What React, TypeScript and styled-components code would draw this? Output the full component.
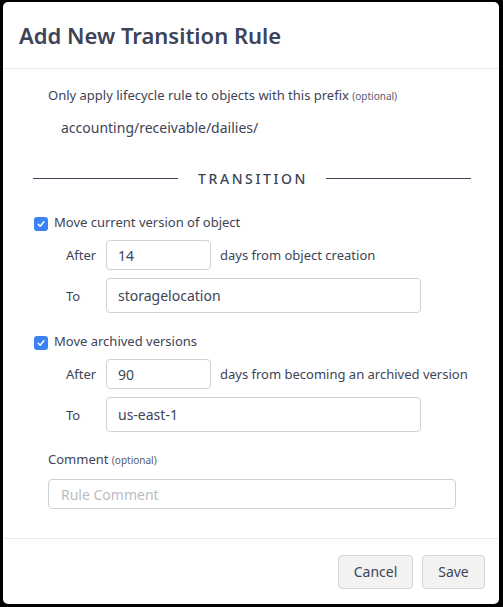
import React from "react";
import styled, { createGlobalStyle } from "styled-components";

const Global = createGlobalStyle`
  html, body { margin: 0; padding: 0; background: #000; }
  body { font-family: "Noto Sans", "Open Sans", sans-serif; color: #3d4457; }
  * { box-sizing: border-box; }
`;

const Page = styled.div`
  padding: 2px 4px 3px 3px;
  width: 503px;
  height: 607px;
`;

const Modal = styled.div`
  background: #fff;
  border-radius: 5px;
  width: 496px;
  height: 602px;
  display: flex;
  flex-direction: column;
  overflow: hidden;
`;

const Header = styled.div`
  height: 67px;
  border-bottom: 1px solid #e6e6e6;
  display: flex;
  align-items: center;
  padding: 0 16px;
`;

const Title = styled.h1`
  margin: 0;
  font-size: 22px;
  font-weight: 600;
  color: #3d4457;
  letter-spacing: 0;
`;

const Body = styled.div`
  flex: 1;
  padding: 17px 28px 0 30px;
  display: flex;
  flex-direction: column;
  border-bottom: 1px solid #ececec;
`;

const FieldLabel = styled.div<{ $mt?: number }>`
  margin-left: 15px;
  margin-top: ${(p) => p.$mt ?? 0}px;
  font-size: 13px;
  line-height: 18px;
  color: #3d4457;
`;

const Optional = styled.span`
  font-size: 10px;
  color: #555c6c;
`;

const PrefixValue = styled.div`
  margin: 13px 0 0 28px;
  font-size: 14px;
  line-height: 20px;
  color: #3d4457;
`;

const Divider = styled.div`
  margin-top: 30px;
  height: 20px;
  display: flex;
  align-items: center;
  gap: 20px;
  &::before, &::after {
    content: "";
    flex: 1;
    height: 1px;
    background: #3d4457;
  }
`;

const DividerText = styled.span`
  font-size: 14px;
  font-weight: 500;
  letter-spacing: 2.6px;
  color: #3d4457;
  margin-right: -2px;
`;

const CheckRow = styled.label<{ $mt: number }>`
  margin-top: ${(p) => p.$mt}px;
  height: 18px;
  display: flex;
  align-items: center;
  gap: 6px;
  padding-left: 1px;
  font-size: 13px;
  color: #3d4457;
`;

const Box = styled.span`
  width: 14px;
  height: 14px;
  border-radius: 3px;
  background: #3b82f6;
  display: inline-flex;
  align-items: center;
  justify-content: center;
  margin-top: 3px;
`;

const SubRow = styled.div<{ $mt: number }>`
  margin-top: ${(p) => p.$mt}px;
  padding-left: 33px;
  display: flex;
  align-items: center;
  font-size: 13px;
  color: #3d4457;
`;

const SubLabel = styled.span`
  width: 40px;
`;

const Input = styled.div<{ $w: number; $h: number; $placeholder?: boolean }>`
  width: ${(p) => p.$w}px;
  height: ${(p) => p.$h}px;
  border: 1px solid #cfd1d4;
  border-radius: 4px;
  display: flex;
  align-items: center;
  padding-left: 11px;
  font-size: 14px;
  color: ${(p) => (p.$placeholder ? "#b9bdc6" : "#3d4457")};
  background: #fff;
`;

const After = styled.span`
  margin-left: 9px;
`;

const CommentInput = styled(Input)`
  margin: 10px 0 0 15px;
  padding-left: 12px;
`;

const Footer = styled.div`
  height: 65px;
  display: flex;
  align-items: center;
  justify-content: flex-end;
  gap: 9px;
  padding: 0 14px 0 0;
`;

const Button = styled.button<{ $w: number }>`
  width: ${(p) => p.$w}px;
  height: 34px;
  border: 1px solid #d3d3d3;
  border-radius: 4px;
  background: #f2f2f2;
  font-family: "Noto Sans", "Open Sans", sans-serif;
  font-size: 14px;
  color: #3d4457;
  padding: 0;
`;

const Check = () => (
  <Box>
    <svg width="10" height="10" viewBox="0 0 10 10">
      <path d="M2.2 5.2 L4.2 7.2 L7.9 2.8" fill="none" stroke="#fff" strokeWidth="1.5" strokeLinecap="round" strokeLinejoin="round" />
    </svg>
  </Box>
);

export default function App() {
  return (
    <>
      <Global />
      <Page>
        <Modal>
          <Header>
            <Title>Add New Transition Rule</Title>
          </Header>
          <Body>
            <FieldLabel>
              Only apply lifecycle rule to objects with this prefix <Optional>(optional)</Optional>
            </FieldLabel>
            <PrefixValue>accounting/receivable/dailies/</PrefixValue>
            <Divider>
              <DividerText>TRANSITION</DividerText>
            </Divider>
            <CheckRow $mt={25}>
              <Check />
              Move current version of object
            </CheckRow>
            <SubRow $mt={9}>
              <SubLabel>After</SubLabel>
              <Input $w={105} $h={30}>14</Input>
              <After>days from object creation</After>
            </SubRow>
            <SubRow $mt={8}>
              <SubLabel>To</SubLabel>
              <Input $w={315} $h={35}>storagelocation</Input>
            </SubRow>
            <CheckRow $mt={19}>
              <Check />
              Move archived versions
            </CheckRow>
            <SubRow $mt={9}>
              <SubLabel>After</SubLabel>
              <Input $w={105} $h={30}>90</Input>
              <After>days from becoming an archived version</After>
            </SubRow>
            <SubRow $mt={8}>
              <SubLabel>To</SubLabel>
              <Input $w={315} $h={35}>us-east-1</Input>
            </SubRow>
            <FieldLabel $mt={18}>
              Comment <Optional>(optional)</Optional>
            </FieldLabel>
            <CommentInput $w={408} $h={30} $placeholder>
              Rule Comment
            </CommentInput>
          </Body>
          <Footer>
            <Button $w={75}>Cancel</Button>
            <Button $w={63}>Save</Button>
          </Footer>
        </Modal>
      </Page>
    </>
  );
}
